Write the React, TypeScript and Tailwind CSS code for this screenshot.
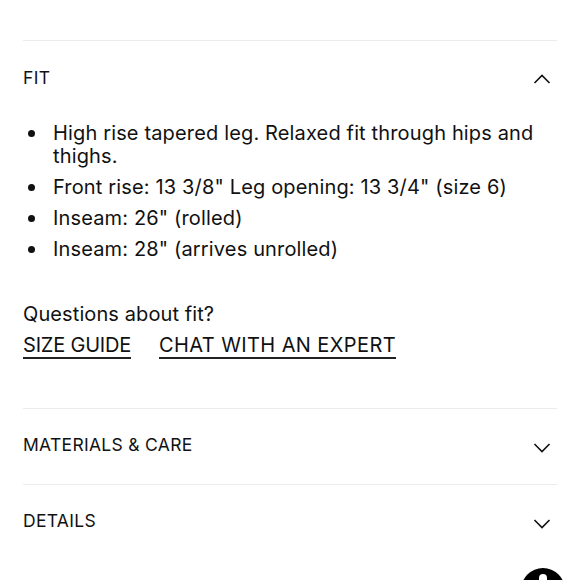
import React from "react";

const bullets = [
  "High rise tapered leg. Relaxed fit through hips and thighs.",
  'Front rise: 13 3/8" Leg opening: 13 3/4" (size 6)',
  'Inseam: 26" (rolled)',
  'Inseam: 28" (arrives unrolled)',
];

function Chevron({ up }: { up?: boolean }) {
  return (
    <svg width="18" height="10" viewBox="0 0 18 10" fill="none" stroke="#111" strokeWidth={1.6}>
      <path d={up ? "M1.5 9L9 1.5L16.5 9" : "M1.5 1L9 8.5L16.5 1"} />
    </svg>
  );
}

function Section({ title }: { title: string }) {
  return (
    <div className="flex h-[76px] items-center justify-between border-t border-[#ececec]">
      <span className="mb-[2px] text-[17.5px] tracking-[0.3px] text-[#111]">{title}</span>
      <span className="mr-[6px] mt-[2px]">
        <Chevron />
      </span>
    </div>
  );
}

export default function App() {
  return (
    <div
      className="relative h-[580px] overflow-hidden bg-white text-[#111]"
      style={{ fontFamily: "Inter, 'Liberation Sans', sans-serif" }}
    >
      <div className="px-[23px] pt-[40px]">
        <div className="flex h-[72px] items-center justify-between border-t border-[#ececec]">
          <span className="mt-[3px] text-[17.5px] tracking-[0.3px]">FIT</span>
          <span className="mr-[6px] mt-[4px]">
            <Chevron up />
          </span>
        </div>

        <ul className="flex flex-col gap-[8px] pt-[10px] text-[20px] leading-[23px] tracking-[0.15px]">
          {bullets.map((b) => (
            <li key={b} className="flex">
              <span className="w-[30px] shrink-0 pl-[5px] pt-[8px]">
                <span className="block h-[6.5px] w-[6.5px] rounded-full bg-[#111]" />
              </span>
              <span className="pr-[14px]">{b}</span>
            </li>
          ))}
        </ul>

        <div className="pt-[41px] text-[20px] leading-[24px] tracking-[0.1px]">Questions about fit?</div>
        <div className="flex gap-[28px] pt-[7px] text-[20px] leading-[24px]">
          <span className="border-b-2 border-[#222] tracking-[-0.2px]">SIZE GUIDE</span>
          <span className="border-b-2 border-[#222] tracking-[0.4px]">CHAT WITH AN EXPERT</span>
        </div>

        <div className="pt-[49px]">
          <Section title="MATERIALS & CARE" />
          <Section title="DETAILS" />
        </div>
      </div>

      <div className="absolute left-[521px] top-[568px] flex h-[44px] w-[44px] items-start justify-center rounded-full bg-black pt-[6px]">
        <span className="h-[6px] w-[8px] rounded-t-full bg-white" />
      </div>
    </div>
  );
}
